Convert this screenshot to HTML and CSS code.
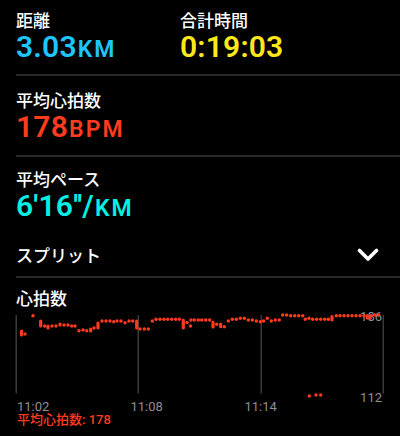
FILE: index.html
```html
<!DOCTYPE html>
<html lang="ja">
<head>
<meta charset="utf-8">
<title>ワークアウト</title>
<link rel="stylesheet" href="styles.css">
</head>
<body>
<div class="screen">
  <section class="block block-top">
    <div class="metric">
      <div class="label">距離</div>
      <div class="value blue">3.03<span class="unit">KM</span></div>
    </div>
    <div class="metric">
      <div class="label">合計時間</div>
      <div class="value yellow">0:19:03</div>
    </div>
  </section>
  <section class="block block-hr">
    <div class="label">平均心拍数</div>
    <div class="value red">178<span class="unit">BPM</span></div>
  </section>
  <section class="block-pace">
    <div class="label">平均ペース</div>
    <div class="value cyan">6'16''/<span class="unit">KM</span></div>
  </section>
  <section class="block split">
    <div class="label">スプリット</div>
    <svg class="chev" width="22" height="15" viewBox="0 0 22 15"><path d="M2.5 2.5 L11 11 L19.5 2.5" fill="none" stroke="#fff" stroke-width="3.6" stroke-linecap="round" stroke-linejoin="round"/></svg>
  </section>
  <section class="chart-block">
    <div class="label">心拍数</div>
    <svg class="chart" width="400" height="104" viewBox="0 308 400 104">
      <g fill="#3a3a3c">
        <rect x="15.5" y="315" width="1.5" height="78.5"/>
        <rect x="137.5" y="315" width="1.5" height="78.5"/>
        <rect x="260.5" y="315" width="1.5" height="78.5"/>
        <rect x="382.5" y="315" width="1.5" height="78.5"/>
      </g>
      <g class="axis" fill="#8e8e93">
        <text x="17" y="410.7">11:02</text>
        <text x="130.5" y="410.7">11:08</text>
        <text x="244.5" y="410.7">11:14</text>
        <text x="382" y="320.5" text-anchor="end">186</text>
        <text x="382" y="401.7" text-anchor="end">112</text>
      </g>
      <g fill="#ff3b1f">
        <rect x="19.9" y="329.4" width="3.2" height="7.2" rx="1.6"/>
        <circle cx="25" cy="334" r="1.7"/>
        <circle cx="33" cy="315.7" r="1.7"/>
        <rect x="39.1" y="319.4" width="3.2" height="8.2" rx="1.6"/>
        <circle cx="44.7" cy="326" r="1.7"/>
        <rect x="46.4" y="324.4" width="3.2" height="5.2" rx="1.6"/>
        <circle cx="52" cy="326" r="1.7"/>
        <circle cx="56" cy="326" r="1.7"/>
        <rect x="58.4" y="322.4" width="3.2" height="4.2" rx="1.6"/>
        <circle cx="64" cy="325" r="1.7"/>
        <circle cx="68" cy="325" r="1.7"/>
        <circle cx="71.7" cy="326" r="1.7"/>
        <circle cx="75" cy="326" r="1.7"/>
        <circle cx="79" cy="330.7" r="1.7"/>
        <circle cx="83" cy="330" r="1.7"/>
        <circle cx="86.7" cy="330.7" r="1.7"/>
        <rect x="89.1" y="327.4" width="3.2" height="5.2" rx="1.6"/>
        <circle cx="94" cy="328" r="1.7"/>
        <rect x="96.4" y="321.4" width="3.2" height="8.2" rx="1.6"/>
        <circle cx="102" cy="321" r="1.7"/>
        <circle cx="106" cy="321" r="1.7"/>
        <circle cx="110" cy="321" r="1.7"/>
        <circle cx="113.7" cy="321.7" r="1.7"/>
        <circle cx="117" cy="321" r="1.7"/>
        <circle cx="121" cy="321" r="1.7"/>
        <circle cx="125" cy="322.7" r="1.7"/>
        <circle cx="129" cy="321" r="1.7"/>
        <circle cx="132.7" cy="321" r="1.7"/>
        <rect x="135.1" y="319.4" width="3.2" height="10.2" rx="1.6"/>
        <circle cx="140" cy="329" r="1.7"/>
        <circle cx="144.3" cy="329" r="1.7"/>
        <circle cx="148.3" cy="329" r="1.7"/>
        <circle cx="152.3" cy="321" r="1.7"/>
        <circle cx="156" cy="319.3" r="1.7"/>
        <circle cx="160" cy="319.3" r="1.7"/>
        <circle cx="164" cy="319.3" r="1.7"/>
        <circle cx="167.7" cy="319.3" r="1.7"/>
        <circle cx="171.7" cy="319.3" r="1.7"/>
        <circle cx="175.7" cy="319.3" r="1.7"/>
        <circle cx="179.3" cy="319.3" r="1.7"/>
        <rect x="181.7" y="318.4" width="3.2" height="11.2" rx="1.6"/>
        <circle cx="187" cy="322.5" r="1.7"/>
        <circle cx="190.5" cy="326" r="1.7"/>
        <circle cx="191" cy="320" r="1.7"/>
        <circle cx="194.3" cy="320" r="1.7"/>
        <circle cx="198.3" cy="320" r="1.7"/>
        <circle cx="201.7" cy="320" r="1.7"/>
        <circle cx="205.7" cy="320" r="1.7"/>
        <circle cx="209.7" cy="320" r="1.7"/>
        <rect x="211.4" y="320.4" width="3.2" height="8.2" rx="1.6"/>
        <circle cx="216.7" cy="324.3" r="1.7"/>
        <rect x="219.1" y="322.4" width="3.2" height="5.9" rx="1.6"/>
        <circle cx="224.3" cy="326.7" r="1.7"/>
        <circle cx="228.3" cy="321" r="1.7"/>
        <circle cx="232.3" cy="319.3" r="1.7"/>
        <circle cx="236.3" cy="319.3" r="1.7"/>
        <circle cx="240.3" cy="318.3" r="1.7"/>
        <circle cx="244.3" cy="318.3" r="1.7"/>
        <circle cx="248.3" cy="320" r="1.7"/>
        <circle cx="252.3" cy="320" r="1.7"/>
        <circle cx="256.3" cy="321" r="1.7"/>
        <circle cx="260.3" cy="321.7" r="1.7"/>
        <circle cx="263.5" cy="321" r="1.7"/>
        <circle cx="267.3" cy="318.3" r="1.7"/>
        <circle cx="271.3" cy="321" r="1.7"/>
        <circle cx="275.3" cy="320" r="1.7"/>
        <circle cx="279.3" cy="320" r="1.7"/>
        <circle cx="282.7" cy="315" r="1.7"/>
        <circle cx="286.7" cy="315" r="1.7"/>
        <circle cx="290.7" cy="315.7" r="1.7"/>
        <circle cx="294.7" cy="315.7" r="1.7"/>
        <circle cx="298.7" cy="315.7" r="1.7"/>
        <circle cx="302.7" cy="315.7" r="1.7"/>
        <circle cx="305.3" cy="319.3" r="1.7"/>
        <circle cx="309" cy="318.3" r="1.7"/>
        <circle cx="312.7" cy="319.3" r="1.7"/>
        <circle cx="316.7" cy="319.3" r="1.7"/>
        <circle cx="320.7" cy="319.3" r="1.7"/>
        <circle cx="324.7" cy="319.3" r="1.7"/>
        <circle cx="328.3" cy="319.3" r="1.7"/>
        <rect x="330.4" y="315.1" width="3.2" height="6.5" rx="1.6"/>
        <circle cx="336.3" cy="315.7" r="1.7"/>
        <circle cx="340" cy="315.7" r="1.7"/>
        <circle cx="344" cy="315.7" r="1.7"/>
        <circle cx="348" cy="315.7" r="1.7"/>
        <circle cx="352" cy="315.7" r="1.7"/>
        <circle cx="356" cy="315.7" r="1.7"/>
        <circle cx="360" cy="315.7" r="1.7"/>
        <circle cx="364" cy="315.7" r="1.7"/>
        <rect x="365.7" y="314.1" width="3.2" height="5.5" rx="1.6"/>
        <circle cx="370" cy="318.3" r="1.7"/>
        <circle cx="371.3" cy="315.7" r="1.7"/>
        <circle cx="375" cy="315" r="1.7"/>
        <circle cx="378.7" cy="315" r="1.7"/>
        <circle cx="309.3" cy="396" r="1.7"/>
        <circle cx="316" cy="395" r="1.7"/>
        <circle cx="320.7" cy="395" r="1.7"/>
      </g>
    </svg>
    <div class="avg">平均心拍数: 178</div>
  </section>
</div>
</body>
</html>
```
FILE: styles.css
```css
html, body {
  margin: 0;
  padding: 0;
  background: #000;
}
body {
  width: 400px;
  height: 436px;
  overflow: hidden;
  color: #fff;
  font-family: "Noto Sans CJK JP", "Noto Sans", sans-serif;
}
.screen {
  display: flex;
  flex-direction: column;
}
.block {
  margin-left: 16px;
  border-bottom: 2px solid #2a2a2c;
}
.block-top {
  display: grid;
  grid-template-columns: 164px 1fr;
  padding-top: 10px;
  height: 64px;
}
.block-hr {
  padding-top: 14px;
  height: 65px;
}
.block-pace {
  margin-left: 16px;
  padding-top: 12px;
  height: 61px;
}
.label {
  font-size: 17px;
  line-height: 20px;
  height: 20px;
  font-weight: 500;
  color: #fff;
}
.value {
  font-family: Roboto, "Liberation Sans", sans-serif;
  font-weight: 600;
  font-size: 30px;
  line-height: 34px;
  height: 34px;
  letter-spacing: 0.2px;
}
.unit {
  font-size: 23px;
  line-height: 1;
  letter-spacing: 2px;
  margin-left: 1px;
}
.blue { color: #1ec6ff; }
.yellow { color: #ffe81a; }
.red { color: #ff3b1f; }
.cyan { color: #00f0e4; }
.split {
  display: flex;
  align-items: center;
  justify-content: space-between;
  height: 20px;
  padding-top: 15px;
  padding-bottom: 11px;
  padding-right: 21px;
}
.chev {
  display: block;
}
.chart-block {
  padding-top: 10px;
}
.chart-block .label {
  margin-left: 16px;
}
.chart {
  display: block;
  overflow: visible;
}
.axis {
  font-family: Roboto, "Liberation Sans", sans-serif;
  font-size: 13px;
}
.avg {
  margin-left: 17px;
  font-size: 13px;
  line-height: 16px;
  font-weight: 500;
  color: #ff3b1f;
  font-family: Roboto, "Noto Sans CJK JP", sans-serif;
}
```
